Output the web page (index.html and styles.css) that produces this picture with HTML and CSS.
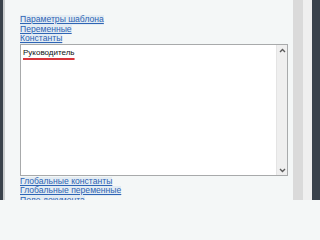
FILE: index.html
```html
<!DOCTYPE html>
<html>
<head>
<meta charset="utf-8">
<link rel="stylesheet" href="styles.css">
</head>
<body>
<div class="frame">
  <div class="edge-dark"></div>
  <div class="edge-grey"></div>
  <main class="panel">
    <nav class="links top-links">
      <a href="#">Параметры шаблона</a>
      <a href="#">Переменные</a>
      <a href="#">Константы</a>
    </nav>
    <div class="editor">
      <div class="editor-text"><span class="spell">Руководитель</span></div>
      <div class="scrollbar">
        <svg class="arrow" width="7" height="5" viewBox="0 0 7 5"><path d="M1 4 L3.5 1.5 L6 4" fill="none" stroke="#5a5a5a" stroke-width="1.4"/></svg>
        <svg class="arrow" width="7" height="5" viewBox="0 0 7 5"><path d="M1 1 L3.5 3.5 L6 1" fill="none" stroke="#5a5a5a" stroke-width="1.4"/></svg>
      </div>
    </div>
    <nav class="links bottom-links">
      <a href="#">Глобальные константы</a>
      <a href="#">Глобальные переменные</a>
      <a href="#">Поле документа</a>
    </nav>
  </main>
  <div class="side-a"></div>
  <div class="side-b"></div>
  <div class="edge-dark right"></div>
</div>
</body>
</html>
```
FILE: styles.css
```css
html, body {
  margin: 0;
  padding: 0;
  width: 320px;
  height: 200px;
  overflow: hidden;
  background: #f4f7f7;
  font-family: "Liberation Sans", Arial, sans-serif;
}
.frame {
  display: flex;
  height: 200px;
  overflow: hidden;
}
.edge-dark {
  width: 3px;
  background: #3a424b;
}
.edge-dark.right {
  width: 8px;
}
.edge-grey {
  width: 2px;
  background: #c9cccd;
}
.panel {
  flex: 1;
  background: #f4f7f7;
  padding: 15px 5px 0 15px;
  display: flex;
  flex-direction: column;
  overflow: hidden;
}
.side-a {
  width: 10px;
  background: #dadada;
}
.side-b {
  width: 9px;
  background: #efefef;
}
.links {
  display: flex;
  flex-direction: column;
  align-items: flex-start;
}
.links a {
  font-size: 8.6px;
  line-height: 9.5px;
  color: #2e64b4;
  text-decoration: underline;
  background: #e3ecf3;
}
.editor {
  flex: none;
  height: 130px;
  border: 1px solid #a8aaab;
  background: #fff;
  display: flex;
}
.editor-text {
  flex: 1;
  padding: 2px 2px;
  font-size: 8px;
  line-height: 11px;
  color: #111;
}
.spell {
  text-decoration: underline;
  text-decoration-color: #d8333a;
  text-decoration-thickness: 2px;
  text-underline-offset: 3px;
}
.scrollbar {
  width: 10px;
  background: #efefef;
  border-left: 1px solid #e4e4e4;
  display: flex;
  flex-direction: column;
  justify-content: space-between;
  align-items: center;
  padding: 3px 0 2px;
}
.bottom-links {
  margin-top: 1px;
}
.bottom-links a {
  line-height: 9.5px;
}
```
